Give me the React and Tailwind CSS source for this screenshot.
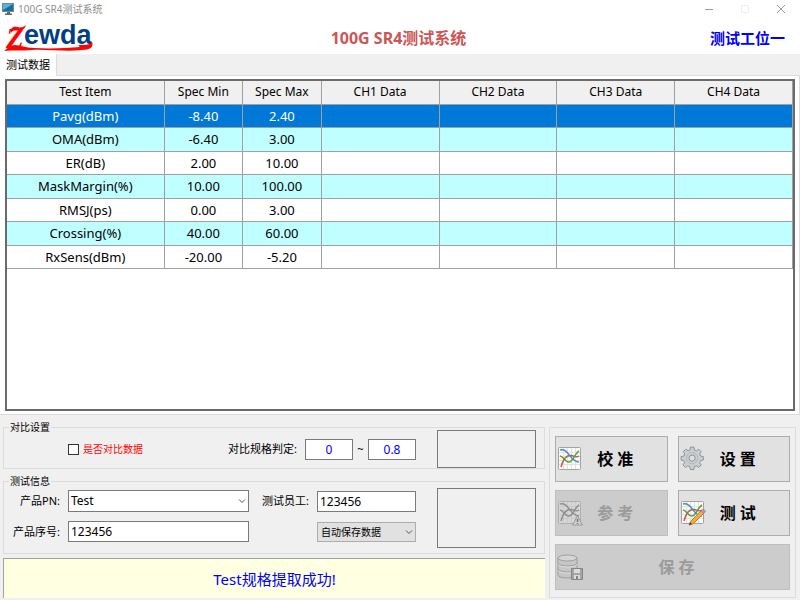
import React, { useState } from 'react';

const columns = [
  { name: 'Test Item', width: 'w-[20%]' },
  { name: 'Spec Min', width: 'w-[10%]' },
  { name: 'Spec Max', width: 'w-[10%]' },
  { name: 'CH1 Data', width: 'w-[15%]' },
  { name: 'CH2 Data', width: 'w-[15%]' },
  { name: 'CH3 Data', width: 'w-[15%]' },
  { name: 'CH4 Data', width: 'w-[15%]' },
];

const specs = [
  { item: 'Pavg(dBm)', min: '-8.40', max: '2.40' },
  { item: 'OMA(dBm)', min: '-6.40', max: '3.00' },
  { item: 'ER(dB)', min: '2.00', max: '10.00' },
  { item: 'MaskMargin(%)', min: '10.00', max: '100.00' },
  { item: 'RMSJ(ps)', min: '0.00', max: '3.00' },
  { item: 'Crossing(%)', min: '40.00', max: '60.00' },
  { item: 'RxSens(dBm)', min: '-20.00', max: '-5.20' },
];

const MonitorIcon = () => (
  <svg className="w-3 h-3" viewBox="0 0 12 12" aria-hidden="true">
    <rect x="0.5" y="0.5" width="11" height="8" fill="#1b6f9f" stroke="#6f8b9a" />
    <path d="M1 1h10L1 7z" fill="#58b3dc" />
    <path d="M5 9h3v1.5h2V12H3v-1.5h2z" fill="#5d6770" />
  </svg>
);

const Logo = () => (
  <svg className="w-24 h-9" viewBox="0 0 96 36" role="img" aria-label="Zewda">
    <text x="20" y="24" fontSize="27" fontWeight="700" fontFamily="Liberation Sans, sans-serif" fill="#003e85">
      ewda
    </text>
    <text x="2" y="28" fontSize="29" fontWeight="700" fontStyle="italic" fontFamily="Liberation Serif, serif" fill="#fd0404">
      Z
    </text>
    <path
      d="M0 31C4 28 6 25 11 25C17 25 21 28 30 28C48 29 62 28 76 27C72 25 76 25 80 25C84 25 87 24 88 22C90 27 86 30 78 30C62 32 42 29 28 30C18 31 10 30 0 31Z"
      fill="#fd0404"
    />
    <path d="M7 13C6 8 9 6 13 7C17 8 20 7 22 5C21 9 18 11 14 10C10 9 9 10 7 13Z" fill="#fd0404" />
  </svg>
);

const ChartIcon = ({ gray, children }) => (
  <svg className="w-7 h-7 shrink-0" viewBox="0 0 28 28" fill="none" aria-hidden="true">
    <rect x="2.5" y="2.5" width="22" height="22" rx="1" fill={gray ? '#d6d6d6' : '#fbfbfb'} stroke={gray ? '#b0b0b0' : '#a3a3a3'} />
    <path d="M7.5 3v21M11.5 3v21M15.5 3v21M19.5 3v21M3 7.5h21M3 11.5h21M3 15.5h21M3 19.5h21" stroke={gray ? '#cacaca' : '#e2e2e2'} />
    <path d="M5 22C7 14 11 10 15 10.5S20 13 23 11" stroke={gray ? '#8f8f8f' : '#d0574b'} strokeWidth="1.5" />
    <path d="M4 11C7 11 9 17 13 17S19 8 23 6" stroke={gray ? '#8f8f8f' : '#55a336'} strokeWidth="1.5" />
    <path d="M4 5C13 3 14 17 23 17" stroke={gray ? '#8f8f8f' : '#3c8fc0'} strokeWidth="1.5" />
    {children}
  </svg>
);

const GearIcon = () => (
  <svg className="w-7 h-7 shrink-0" viewBox="-1 -1 32 32" aria-hidden="true">
    <path
      d="M11.5 2h4l.6 3.2 2.3 1 2.7-1.8 2.8 2.8-1.8 2.7 1 2.3 3.2.6v4l-3.2.6-1 2.3 1.8 2.7-2.8 2.8-2.7-1.8-2.3 1-.6 3.2h-4l-.6-3.2-2.3-1-2.7 1.8-2.8-2.8 1.8-2.7-1-2.3L1 16.8v-4l3.2-.6 1-2.3-1.8-2.7 2.8-2.8 2.7 1.8 2.3-1z"
      transform="translate(.5 -.6)"
      fill="#cccfd2"
      stroke="#85898d"
      strokeLinejoin="round"
    />
    <circle cx="14" cy="14" r="6.5" fill="none" stroke="#b0b3b6" />
    <circle cx="14" cy="14" r="3.5" fill="#e1e1e1" stroke="#85898d" />
  </svg>
);

const DatabaseIcon = () => (
  <svg className="w-7 h-7 shrink-0" viewBox="0 0 28 28" aria-hidden="true">
    <path d="M2 5v17c0 4 19 4 19 0V5z" fill="#c6c6c6" stroke="#9f9f9f" />
    <path d="M2 10c0 4 19 4 19 0M2 16c0 4 19 4 19 0" fill="none" stroke="#999999" />
    <path d="M2 11c0 4 19 4 19 0M2 17c0 4 19 4 19 0" fill="none" stroke="#dedede" />
    <ellipse cx="11.5" cy="5" rx="9.5" ry="3" fill="#d5d5d5" stroke="#9f9f9f" />
    <path d="M15.5 15.5h11v11h-11z" fill="#a4a4a4" stroke="#858585" />
    <path d="M18 16h6v4h-6zM18 22h6v4h-6z" fill="#dcdcdc" />
    <path d="M20 23h2v3h-2z" fill="#858585" />
  </svg>
);

const Chevron = () => (
  <svg className="absolute right-[3px] top-1/2 -translate-y-1/2 w-2 h-2 pointer-events-none" viewBox="0 0 8 8" fill="none" aria-hidden="true">
    <path d="M1 2.5l3 3 3-3" stroke="#555" />
  </svg>
);

const ActionButton = ({ icon, label, disabled, wide }) => (
  <button
    type="button"
    disabled={disabled}
    className={`flex items-center h-[46px] border text-base font-bold ${wide ? 'col-span-2' : ''} ${
      disabled ? 'bg-[#cccccc] border-[#bfbfbf] text-[#9b9b9b]' : 'bg-[#e1e1e1] border-[#adadad] text-black'
    }`}
  >
    {icon}
    <span className="flex-1 pr-5 text-center whitespace-pre">{label}</span>
  </button>
);

const App = () => {
  const [compare, setCompare] = useState(false);
  const field = 'border border-[#7a7a7a] bg-white outline-none';

  return (
    <div className="flex flex-col bg-[#f0f0f0] text-black font-['Noto_Sans','Noto_Sans_CJK_SC',sans-serif] text-[11px] leading-4">
      <header className="bg-white">
        <div className="flex items-center justify-between h-[18px] pl-[2px] pr-[14px]">
          <div className="flex items-center gap-1 text-[10px] text-[#8f8f8f]">
            <MonitorIcon />
            <span>100G SR4测试系统</span>
          </div>
          <div className="flex items-center gap-[26px] text-[#999999]">
            <button type="button" aria-label="Minimize">
              <svg className="w-[10px] h-[10px]" viewBox="0 0 10 10"><path d="M1 5.5h8" stroke="currentColor" /></svg>
            </button>
            <button type="button" aria-label="Maximize" disabled className="text-[#eeeeee]">
              <svg className="w-[10px] h-[10px]" viewBox="0 0 10 10" fill="none"><path d="M1.5 1.5h7v7h-7z" stroke="currentColor" /></svg>
            </button>
            <button type="button" aria-label="Close">
              <svg className="w-[10px] h-[10px]" viewBox="0 0 10 10"><path d="M1 1l8 8M9 1L1 9" stroke="currentColor" /></svg>
            </button>
          </div>
        </div>
        <div className="grid grid-cols-3 items-center h-9 pt-[2px] pl-1 pr-[15px] text-[15px] font-bold">
          <Logo />
          <h1 className="pl-2 text-center text-base text-[#cd5555]">100G SR4测试系统</h1>
          <p className="text-right text-[#0000ff]">测试工位一</p>
        </div>
      </header>

      <div className="flex h-[22px]">
        <button type="button" className="bg-white border-r border-[#dcdcdc] px-[6px]">测试数据</button>
        <div className="flex-1 border-b border-[#dcdcdc]" />
      </div>

      <main className="bg-white border-b border-r border-[#dcdcdc] py-[3px] pl-[5px] pr-1">
        <div className="h-[332px] border-2 border-[#6a6a6a] bg-white">
          <table className="w-full h-[188px] table-fixed border-collapse text-center">
            <thead>
              <tr className="h-[23px] bg-[#f0f0f0]">
                {columns.map((c) => (
                  <th key={c.name} className={`${c.width} p-0 border-r border-b border-[#a0a0a0] font-normal text-[12px]`}>{c.name}</th>
                ))}
              </tr>
            </thead>
            <tbody className="text-[13px]">
              {specs.map((s, i) => (
                <tr key={s.item} className={i === 0 ? 'bg-[#0078d7] text-white' : i % 2 ? 'bg-[#c0ffff]' : 'bg-white'}>
                  {[s.item, s.min, s.max, '', '', '', ''].map((v, k) => (
                    <td key={k} className="p-0 border-r border-b border-[#a0a0a0]">{v}</td>
                  ))}
                </tr>
              ))}
            </tbody>
          </table>
        </div>
      </main>

      <div className="flex gap-1 pl-[3px] pr-1 pt-[5px] pb-1">
        <div className="flex-1 flex flex-col">
          <fieldset className="h-[49px] border border-[#dcdcdc] pr-2">
            <legend className="ml-[5px] px-px text-[10px] leading-[14px]">对比设置</legend>
            <div className="flex items-center -mt-1">
              <label className="flex items-center gap-1 ml-16 text-[10px] text-[#ff0000]">
                <input
                  type="checkbox"
                  checked={compare}
                  onChange={(e) => setCompare(e.target.checked)}
                  className="appearance-none w-[11px] h-[11px] border border-[#333333] bg-white checked:bg-[#0078d7]"
                />
                是否对比数据
              </label>
              <label htmlFor="low" className="ml-auto mr-2">对比规格判定:</label>
              <input id="low" defaultValue="0" className={`${field} w-12 h-[21px] text-center text-[12px] text-[#0000ff]`} />
              <label htmlFor="high" className="w-[15px] text-center">~</label>
              <input id="high" defaultValue="0.8" className={`${field} w-12 h-[21px] text-center text-[12px] text-[#0000ff]`} />
              <output className="w-[99px] h-[38px] ml-[21px] border border-[#7a7a7a]" />
            </div>
          </fieldset>

          <fieldset className="h-20 mt-[5px] border border-[#dcdcdc] pr-2">
            <legend className="ml-[5px] px-px text-[10px] leading-[14px]">测试信息</legend>
            <div className="flex">
              <div className="flex-1 grid grid-cols-[56px_1fr_52px_99px] gap-x-2 gap-y-[9px] items-center content-start pt-[2px]">
                <label htmlFor="pn" className="text-right">产品PN:</label>
                <div className="relative">
                  <select id="pn" className={`${field} block appearance-none w-full h-[22px] px-[2px] text-[12px]`}>
                    <option>Test</option>
                  </select>
                  <Chevron />
                </div>
                <label htmlFor="worker" className="text-right whitespace-nowrap">测试员工:</label>
                <input id="worker" defaultValue="123456" className={`${field} min-w-0 h-[21px] px-[2px] text-[12px]`} />
                <label htmlFor="serial" className="text-right">产品序号:</label>
                <input id="serial" defaultValue="123456" className={`${field} min-w-0 h-[21px] px-[2px] text-[12px]`} />
                <div className="relative col-start-4">
                  <select aria-label="保存方式" className="block appearance-none w-full h-5 px-[3px] border border-[#adadad] bg-[#e1e1e1] text-[10px]">
                    <option>自动保存数据</option>
                  </select>
                  <Chevron />
                </div>
              </div>
              <output className="w-[99px] h-[60px] ml-[21px] border border-[#7a7a7a]" />
            </div>
          </fieldset>

          <p role="status" className="flex items-center justify-center h-10 mt-1 border-t border-l border-[#a0a0a0] bg-[#ffffe1] text-[15px] text-[#0000ff]">
            Test规格提取成功!
          </p>
        </div>

        <section className="grid grid-cols-2 content-start gap-x-[10px] gap-y-2 w-[247px] mt-[7px] p-[5px] pt-2 border border-[#dcdcdc]">
          <ActionButton icon={<ChartIcon />} label="校 准" />
          <ActionButton icon={<GearIcon />} label="设 置" />
          <ActionButton
            disabled
            label="参 考"
            icon={
              <ChartIcon gray>
                <path d="M21.5 17l5 9h-10z" fill="#d0d0d0" stroke="#9a9a9a" strokeLinejoin="round" />
                <path d="M21.5 20v3M21.5 24v1" stroke="#777" strokeWidth="1.5" />
              </ChartIcon>
            }
          />
          <ActionButton
            label="测 试"
            icon={
              <ChartIcon>
                <path d="M10 26l2-4L23 11l3 2-12 12z" fill="#f6ad3c" stroke="#b9802f" />
                <path d="M10 26l1-3 2 2z" fill="#4a3a2c" />
                <path d="M22 12l2-2 2.5 2-2 2z" fill="#c98fc0" stroke="#b07fac" />
              </ChartIcon>
            }
          />
          <ActionButton disabled wide icon={<DatabaseIcon />} label="保 存" />
        </section>
      </div>
    </div>
  );
};

export default App;
